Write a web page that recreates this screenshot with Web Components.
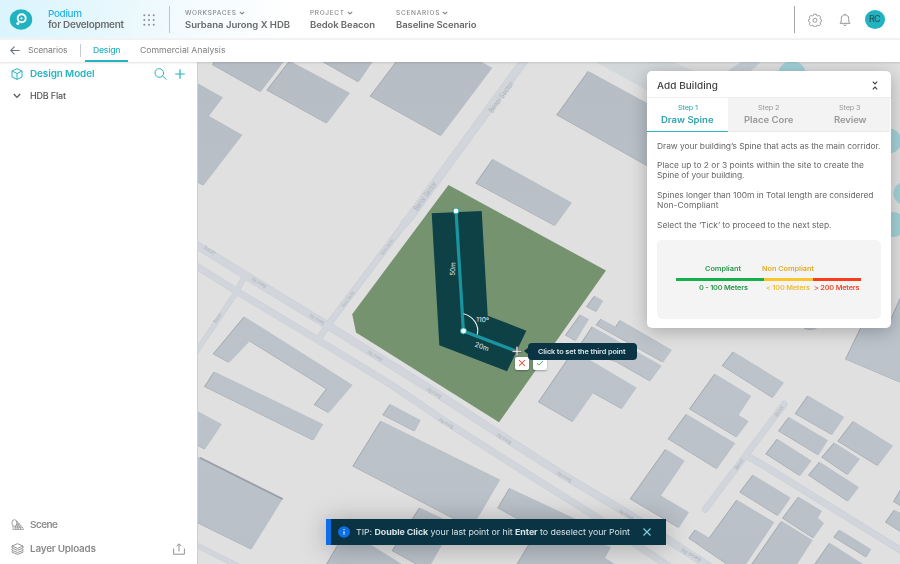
<!DOCTYPE html>
<html lang="en">
<head>
<meta charset="utf-8">
<title>Podium for Development</title>
<style>
html,body{margin:0;height:100%;overflow:hidden}
body{font-family:Inter,"Liberation Sans",sans-serif;color:#666;background:#fff}
</style>
</head>
<body>
<podium-app></podium-app>
<script>
const define = (name, html, setup) => customElements.define(name, class extends HTMLElement {
  constructor() {
    super();
    const t = document.createElement('template');
    t.innerHTML = html;
    this.attachShadow({ mode: 'open' }).append(t.content.cloneNode(true));
  }
  connectedCallback() { if (setup) setup(this, this.shadowRoot); }
});

/* A single line of slightly widened text, tracked so that it spans the width given in "w". */
const WIDEN = 1.08;
define('fit-text', `<style>
  :host{display:block;white-space:nowrap;flex:none}
  span{display:inline-block;transform-origin:0 50%}
</style><span><slot></slot></span>`, (el, root) => {
  const w = parseFloat(el.getAttribute('w'));
  const span = root.querySelector('span');
  el.style.width = w + 'px';
  span.style.letterSpacing = '0px';
  span.style.transform = 'none';
  const n = el.textContent.length;
  const natural = span.getBoundingClientRect().width;
  span.style.letterSpacing = ((w / WIDEN - natural) / (n - 1)) + 'px';
  span.style.transform = `scaleX(${WIDEN})`;
});

const ICONS = {
  logo: ['0 0 24 22', '<ellipse cx="12" cy="11.500" rx="11.2" ry="10.3" fill="#22b3c1" stroke="none"/><circle cx="12.700" cy="10.2" r="4" stroke="#fff" stroke-width="1.9"/><circle cx="12.5" cy="10.3" r="1.1" fill="#fff" stroke="none"/><circle cx="8.8" cy="15.4" r="1.5" fill="#fff" stroke="none"/>'],
  apps: ['0 0 12 12', [1.3, 6, 10.7].map(y => [1.3, 6, 10.7].map(x => `<circle cx="${x}" cy="${y}" r=".95" fill="currentColor" stroke="none"/>`).join('')).join('')],
  caret: ['0 0 6 4', '<path d="M.8.8 3 3 5.2.8" stroke-width="1.2"/>'],
  gear: ['0 0 14 14', '<path d="M5.8 1.1h2.4l.4 1.4 1.2.5 1.3-.7 1.6 1.7-.7 1.2.5 1.3 1 .3v1.5l-1.1.5-.4 1.1.7 1.3-1.6 1.6-1.3-.7-1.2.5-.4 1.3H5.8l-.4-1.3-1.2-.5-1.3.7-1.6-1.6.7-1.3-.5-1.1-1-.5V6.800l1-.3.5-1.300-.7-1.200 1.600-1.700 1.300.7 1.200-.5z" stroke-width=".85"/><circle cx="7" cy="7.200" r="2" stroke-width=".85"/>'],
  bell: ['0 0 12 14', '<path d="M1 10.300h10c-1-.8-1.300-1.800-1.300-3.500V5.500C9.700 3.300 8.200 1.900 6 1.900S2.300 3.300 2.300 5.500v1.300C2.300 8.500 2 9.500 1 10.300zM6 .8v1M4.700 11.500c.2 1.500 2.400 1.500 2.600 0" stroke-width=".95"/>'],
  back: ['0 0 10 9', '<path d="M9.600 4.500H.8M4.500.7.7 4.500l3.800 3.800" stroke-width="1.100"/>'],
  cube: ['0 0 12 12', '<path d="M6 .7 11 3v6L6 11.400 1 9V3zM1 3l5 2.500L11 3M6 5.500v5.900" stroke-width="1"/>'],
  search: ['0 0 13 12', '<circle cx="5.300" cy="5" r="4.300" stroke-width="1"/><path d="m8.500 8 4 3.500" stroke-width="1"/>'],
  plus: ['0 0 10 10', '<path d="M5 .3v9.400M.2 5h9.600" stroke-width="1.200"/>'],
  down: ['0 0 8 6', '<path d="m.8 1 3.200 3.400L7.200 1" stroke-width="1.300"/>'],
  scene: ['0 0 13 12', '<ellipse cx="3.400" cy="4" rx="2.500" ry="3.300" stroke-width=".8"/><path d="M2 7v3.500h10.300v-1.200L5.500 1.600M4.200 7.300 5 10.300M5.800 5l1.500 5.300M6 3.300l4 7M3.300 8.900l8-.2M4 7.200l6-.2M6 5.200l2.600-.1" stroke-width=".7"/>'],
  layers: ['0 0 13 12', '<path d="M6.500.7 12 3 6.500 5.400 1 3zM1 3v2l5.500 2.300L12 5V3M1 5.900v1.400l5.500 2.200L12 7.300V5.900M1 8.200v1l5.500 2.200L12 9.200v-1" stroke-width=".9"/>'],
  upload: ['0 0 12 12', '<path d="M.6 5.500v5.700h10.800V5.500M6 8.500V.9M3.600 3.200 6 .8l2.400 2.400" stroke-width=".95"/>'],
  collapse: ['0 0 6 9', '<path d="M.8.7 3 2.900 5.200.7M.8 8.300 3 6.100l2.200 2.200" stroke-width="1.100"/>'],
  info: ['0 0 12 12', '<ellipse cx="6" cy="6" rx="6" ry="5.700" fill="#0e6ee6" stroke="none"/><path d="M6 5.200V8.600M6 3v1" stroke="#fff" stroke-width="1"/>'],
  close: ['0 0 8 8', '<path d="m.5.5 7 7M7.500.5l-7 7" stroke-width="1.200"/>'],
  tick: ['0 0 8 6', '<path d="m.5 3.400 2.200 2L7.500.6" stroke-width="1.100"/>'],
};
define('ui-icon', `<style>:host{display:block;flex:none;line-height:0}svg{display:block}</style>`, (el, root) => {
  const [box, body] = ICONS[el.getAttribute('name')];
  const [, , w, h] = box.split(' ');
  root.querySelector('svg')?.remove();
  root.append(document.createRange().createContextualFragment(
    `<svg width="${w}" height="${h}" viewBox="${box}" fill="none" stroke="currentColor">${body}</svg>`));
});

define('crumb-item', `<style>
  :host{display:block;height:25px}
  .k{display:flex;gap:3px;align-items:center;height:8px;font-size:6px;line-height:8px;font-weight:500;color:#8a8a8a}
  .v{font-size:8.800px;line-height:12px;margin-top:1.500px;font-weight:600;color:#686868}
</style><div class="k"><slot name="kind"></slot><ui-icon name="caret"></ui-icon></div><div class="v"><slot></slot></div>`);

define('top-bar', `<style>
  :host{display:flex;box-sizing:border-box;height:40px;border-bottom:2px solid #f3f3f3;padding-left:9px;
    background:linear-gradient(100deg,#dbf4fd 0,#e4f7fd 90px,#f4fbfe 190px,#fff 290px)}
  .logo{margin-top:8px;width:24px}
  .brand{margin:8px 0 0 15px;width:95px;font-size:9.200px;line-height:11.300px;font-weight:600;color:#6c6c6c}
  .brand .p{color:#23b3e4;font-weight:500}
  .apps{margin-top:14px;width:12px;color:#888}
  .rule{width:1px;height:27px;margin-top:6px;background:#bcc4c9}
  .apps + .rule{margin-left:14px}
  nav{display:grid;grid-template-columns:125px 85.500px 100px;margin:9px 0 0 15px;flex:1}
  .rule.r{background:#a5a5a5}
  .g{margin:13px 0 0 13.500px;color:#8c8c8c}
  .b{margin:12.500px 0 0 17px;color:#8c8c8c}
  .a{box-sizing:border-box;margin:10px 15px 0 14px;width:20px;height:18.500px;border-radius:50%;background:#22b3c1;color:#25525b;
    display:flex;justify-content:center;align-items:center;font-size:8.300px;font-weight:500}
</style>
<ui-icon class="logo" name="logo"></ui-icon>
<div class="brand"><fit-text class="p" w="34">Podium</fit-text><fit-text w="76">for Development</fit-text></div>
<ui-icon class="apps" name="apps"></ui-icon><div class="rule"></div>
<nav>
<crumb-item><fit-text slot="kind" w="51">WORKSPACES</fit-text><fit-text w="105">Surbana Jurong X HDB</fit-text></crumb-item>
<crumb-item><fit-text slot="kind" w="34">PROJECT</fit-text><fit-text w="65">Bedok Beacon</fit-text></crumb-item>
<crumb-item><fit-text slot="kind" w="43.500">SCENARIOS</fit-text><fit-text w="80.500">Baseline Scenario</fit-text></crumb-item>
</nav>
<div class="rule r"></div>
<ui-icon class="g" name="gear"></ui-icon><ui-icon class="b" name="bell"></ui-icon>
<div class="a"><fit-text w="11.500">RC</fit-text></div>`);

define('sub-nav', `<style>
  :host{display:flex;height:22px;position:relative;z-index:2;background:#fff;box-shadow:0 1px 2px rgba(0,0,0,.13);font-size:8px;line-height:10px;color:#7c7c7c;box-sizing:border-box;padding-left:10px}
  ui-icon{margin-top:6px;color:#68727a}
  .t{margin:5px 0 0 7.500px}
  .rule{width:1px;height:13px;margin:4px 4px 0 12.500px;background:#c4ccd2}
  .on{box-sizing:border-box;width:43px;padding:5px 0 0 8px;border-bottom:2px solid #25b4c2;color:#25b4c2;font-weight:500;height:21.500px}
  .c{margin:5px 0 0 12.500px}
</style>
<ui-icon name="back"></ui-icon><fit-text class="t" w="39.500">Scenarios</fit-text><div class="rule"></div>
<div class="on"><fit-text w="27.500">Design</fit-text></div><fit-text class="c" w="85.500">Commercial Analysis</fit-text>`);

define('side-bar', `<style>
  :host{display:flex;flex-direction:column;box-sizing:border-box;width:197px;background:#fff;padding:5px 12px 8px 11px;font-size:9.200px;line-height:14px;color:#8b8b8b;font-weight:600}
  .row{display:grid;grid-template-columns:19px 1fr auto auto;align-items:center}
  .top{color:#25b4c2;height:14px}
  .top ui-icon:nth-of-type(2){margin-right:8.500px}
  .hdb{color:#555;font-size:8.300px;font-weight:500;height:14px;margin-top:8px}
  .hdb ui-icon{margin-left:2px}
  .gap{flex:1}
  .low{height:14px}
  .low + .low{margin-top:10px}
</style>
<div class="row top"><ui-icon name="cube"></ui-icon><fit-text w="64.500">Design Model</fit-text><ui-icon name="search"></ui-icon><ui-icon name="plus"></ui-icon></div>
<div class="row hdb"><ui-icon name="down"></ui-icon><fit-text w="36">HDB Flat</fit-text></div>
<div class="gap"></div>
<div class="row low"><ui-icon name="scene"></ui-icon><fit-text w="28">Scene</fit-text></div>
<div class="row low"><ui-icon name="layers"></ui-icon><fit-text w="66">Layer Uploads</fit-text><ui-icon name="upload"></ui-icon></div>`);

const BUILDINGS = [
  '215,60 213.300,65 261,91.700 285,60', '290,61 350,93 327,123.300 267.300,90.300', '320,60 358.700,82 374,60',
  '398,60 370.700,96.300 441.300,135.700 492.300,68 478,60', '190,79 223,97.500 209,116 242.500,135 203.700,185.300 190,178',
  '588.700,71.300 680,121 655,170 557.300,115', '493.300,159.300 572,202.700 555.300,225.700 476.300,183.300',
  '595,296 603.300,300.700 596.700,311.700 587,306.700', '580.700,314.700 589,319.300 576,340.700 566,335.300',
  '601.300,319 616,327 620.700,320.300 672,350 663.300,362.300 596.700,325',
  '592.700,326.700 661.700,365.700 650.300,381 617,362 577,350',
  '569,358 539,402 573,421.700 593.300,392.700 622,408.700 636.700,387.700 590,360',
  '733.700,351.700 784,382.700 773,397.700 722.700,365.700',
  '715.300,374 751.300,396 738.700,415 748.700,421.300 737,437 690,409',
  '686.700,414.300 735.300,443.300 717,468.700 668.700,439',
  '666,449.300 684.700,460.700 661,495.700 689,512.300 679,527.700 630.700,499',
  '808.300,395.700 844.300,417 832.300,434.700 795.700,413.700', '789.300,417.300 828,440.300 818.700,455 779,431',
  '777.700,439 811.700,460.700 800.300,475.700 766.300,454', '853.700,421.300 893,445.700 878,465.700 838.300,441.300',
  '834.700,442.700 860,459 848,474.700 822.300,457.300', '820,462 859,487.300 848.300,501.300 809,475.300',
  '753.300,475 790.700,497.700 778.300,515.700 740.300,492.300',
  '799,497 822,511 818,518 824,523.300 813.700,538 783,518.300',
  '737.300,500 774.300,522.300 745,566 730,566 689.300,538.300 695.700,529.700 709.700,538',
  '782,521.300 812.700,540.300 796,566 751,566', '840,530 871.300,549.300 866.700,557.300 834.300,537.300',
  '830,543 866,566 814,566', '905,483 894,501.700 905,508', '894.700,510 905,515 905,534 886,522.300',
  '846,359.300 863,324 889,324 905,289 905,384 896.700,380.700',
  '244.700,316.700 352.700,385 329,412.700 314.700,404.700 327,389 250,341 229.300,362.500 213.700,354',
  '214.700,371.700 323.300,424.300 313.700,440.300 205,386.700', '190,407 222,424.300 205,449.300 190,441',
  '190,452 200,457.700 282.700,499 251.700,549.300 190,519',
  '390.700,404.300 420.700,420.300 415,431.300 383.300,415', '381.300,421 500.300,479.700 472,528 353.300,466.300',
  '420,507.700 454,524 430,566 420,566 392.700,550.700', '347,530 405,566 326,566',
  '510,488.300 580,521 570,535 540,531 498.300,508', '541,525 611,547 605,558 618,566 516.500,566',
];
const ROADS = [
  ['M526,58 410,217 404,224', 8.500], ['M408,219 328,325 318,340', 6.500],
  ['M190,241 245,275 327,325 430,389 503,436.500 563,475 627,513 670,541 710,567', 8],
  ['M190,262 237,291.500 318,340 390,384 447,422.500 543,483.500 590,513 640,547 670,567', 7],
  ['M245,275 236.700,291.700 194,355', 5.500], ['M190,542 242,568', 5.500],
  ['M784.300,404 705,509.500', 6.500], ['M747,456 763,465 905,553', 7],
];
const LABELS = [
  ['Benoi Sector', 501, 97, -54, 37, 7.500], ['Benoi Sector', 425, 196, -54, 34, 7.500],
  ['Benoi Sector', 387, 247, -54, 19, 4.500], ['Benoi Sector', 348, 299, -54, 19, 4.500],
  ['Benoi Rd', 259, 283, 211, 16, 5], ['Benoi Rd', 317, 319.500, 211, 16, 5], ['Benoi Rd', 375, 356, 211, 16, 5],
  ['Benoi Rd', 434, 393, 212, 16, 5], ['Benoi Rd', 446, 423.500, 212, 16, 5], ['Benoi Rd', 504, 439, 212, 16, 5],
  ['Benoi Rd', 564, 477, 212, 16, 5], ['Benoi Rd', 626, 515, 212, 16, 5], ['Benoi Rd', 691, 555, 209, 22, 5.500],
  ['Jurong', 209.500, 251, 210, 13, 6], ['Sector', 217.500, 318, -55, 11, 5], ['Benoi', 779, 411, -54, 12, 5], ['Benoi', 739, 464, -54, 12, 5],
];
const roads = (extra, color) => ROADS.map(([d, w]) => `<path d="${d}" stroke="${color}" stroke-width="${w + extra}"/>`).join('');
const label = ([t, x, y, a, w, s], c) => `<text transform="translate(${x} ${y}) rotate(${a})" text-anchor="middle" dy=".35em" textLength="${w}" lengthAdjust="spacingAndGlyphs" font-size="${s}" fill="${c}">${t}</text>`;

define('site-map', `<style>
  :host{display:block;overflow:hidden;background:#e0e0e0}
  svg{display:block;font-family:Inter,sans-serif}
  .b{filter:drop-shadow(-.5px .6px .5px rgba(85,95,108,.45))}
</style>
<svg width="703" height="502" viewBox="197 62 703 502">
<defs><linearGradient id="bg" gradientUnits="userSpaceOnUse" x1="0" y1="62" x2="0" y2="564"><stop offset="0" stop-color="#b6bdc5"/><stop offset=".6" stop-color="#bcc3cb"/><stop offset="1" stop-color="#b9c0c8"/></linearGradient></defs>
<path d="M592,60 652,93 697,72 668,60z" fill="#d2d7da"/>
<path d="M744,60 720,76 745,76 763,60z" fill="#c7ced6"/>
<g fill="none" stroke-linecap="round" stroke-linejoin="round">${roads(0, '#cacfd6')}${roads(-1.200, '#d2d6dc')}</g>
${LABELS.map(l => label(l, '#abb0b8')).join('')}
<g class="b" fill="url(#bg)">${BUILDINGS.map(p => `<polygon points="${p}"/>`).join('')}<ellipse cx="811" cy="323" rx="9" ry="7"/></g>
<path d="M200,457.700 282.700,499" stroke="#979ea5" stroke-width="1.800"/>
<g fill="#a2d2d9"><circle cx="792" cy="75" r="14"/><circle cx="889" cy="141" r="12.500"/><circle cx="905" cy="193.500" r="11.500"/><circle cx="893" cy="224.500" r="12.500"/></g>
<polygon points="448.500,185 606,270.500 499,422.300 356,332.500 352.200,314.300" fill="#769370"/>
<polygon points="431.700,213.300 481.700,211 487.700,315.700 526.300,330.700 507,371.300 439.300,345.300" fill="#0d4146"/>
<path d="M456,210.700 463.400,331 516.700,351.300" fill="none" stroke="#1a949f" stroke-width="3.200"/>
<path d="M463.500,313.700C473,316 479.500,325 477.300,334.500" fill="none" stroke="#e9f2f2" stroke-width="1.100"/>
<g fill="#fff" stroke="#1a9ca8" stroke-width="1"><circle cx="456" cy="210.900" r="3"/><circle cx="463.500" cy="330.900" r="3"/></g>
${label(['50m', 452.800, 269, -87, 13.500, 6.800], '#e9f2f2')}${label(['110º', 482.500, 319.700, 3, 13, 6.800], '#e9f2f2')}${label(['20m', 482, 346.500, 20, 14.500, 6.800], '#e9f2f2')}
<path d="M517,346.300V356.300M512,351.300H522" stroke="#555" stroke-width="2.200"/><path d="M517,346.800V355.800M512.500,351.300H521.500" stroke="#fff" stroke-width="1.100"/>
</svg>`);

define('point-tip', `<style>
  :host{display:flex;align-items:center;justify-content:center;position:relative;box-sizing:border-box;width:109px;height:17px;border-radius:4px;background:#0a3443;color:#dbe7ea;font-size:6.800px;font-weight:600}
  :host::before{content:"";position:absolute;left:-4px;top:4.500px;border:4px solid transparent;border-left:0;border-right:5px solid #0a3443}
</style><slot></slot>`);
define('mini-button', `<style>
  :host{display:flex;align-items:center;justify-content:center;width:14px;height:12.500px;border-radius:2px;background:#fff;box-shadow:0 1px 2px rgba(0,0,0,.3)}
  ::slotted(ui-icon){transform:scale(.86)}
</style><slot></slot>`);

define('step-tab', `<style>
  :host{display:flex;flex-direction:column;align-items:center;box-sizing:border-box;height:34px;padding-top:5px;background:#f3f3f3;color:#999;border-bottom:1px solid #e9e9e9}
  :host([active]){background:#fff;color:#2da3b0;border-bottom:1.500px solid #2bb5c3}
  .s{font-size:6.800px;line-height:9px}
  .n{font-size:8.800px;line-height:12px;margin-top:2px;font-weight:600}
</style><div class="s"><slot name="step"></slot></div><div class="n"><slot></slot></div>`);

define('length-legend', `<style>
  :host{display:block;box-sizing:border-box;height:79px;border-radius:5px;background:#f4f4f4;padding:24px 19.500px 0 19px;font-size:6.800px;line-height:10px;font-weight:600}
  .r{display:flex}
  .r :first-child{color:#25984b}.r :nth-child(2){color:#e0ac25}.r :nth-child(3){color:#f04a2b}
  .t{padding-left:29px;gap:21px}
  .bar{display:grid;grid-template-columns:88fr 48.500fr 48.500fr;height:3px;margin:4px 0 2px}
  .bar i:nth-child(1){background:#16b04b}.bar i:nth-child(2){background:#fbc62c}.bar i:nth-child(3){background:#f83e1c}
  .d{padding-left:22.500px}
  .d :nth-child(2){margin-left:18.500px;color:#f0bd32}.d :nth-child(3){margin-left:4px}
</style>
<div class="r t"><fit-text w="36">Compliant</fit-text><fit-text w="52">Non Compliant</fit-text></div>
<div class="bar"><i></i><i></i><i></i></div>
<div class="r d"><fit-text w="49">0 - 100 Meters</fit-text><fit-text w="44">&lt; 100 Meters</fit-text><fit-text w="45.500">&gt; 200 Meters</fit-text></div>`);

define('build-panel', `<style>
  :host{display:flex;flex-direction:column;box-sizing:border-box;width:243.500px;height:256.500px;border-radius:5px;background:#fff;box-shadow:0 3px 18px rgba(0,0,0,.26);overflow:hidden}
  header{display:flex;flex:none;justify-content:space-between;align-items:center;box-sizing:border-box;height:27px;padding:2px 12.500px 0 10px;font-size:9.200px;font-weight:500;color:#3d3d3d;border-bottom:1px solid #eee}
  .tabs{display:grid;flex:none;grid-template-columns:repeat(3,1fr)}
  .copy{box-sizing:border-box;height:107.500px;flex:none;padding:9.500px 10px 0;font-size:7.800px;line-height:9.900px;color:#666}
  .copy p{margin:0 0 10px}
  length-legend{flex:none;margin:0 10px}
</style>
<header><fit-text w="61">Add Building</fit-text><ui-icon name="collapse"></ui-icon></header>
<div class="tabs">
<step-tab active><fit-text slot="step" w="20">Step 1</fit-text><fit-text w="52.500">Draw Spine</fit-text></step-tab>
<step-tab><fit-text slot="step" w="21.500">Step 2</fit-text><fit-text w="49.500">Place Core</fit-text></step-tab>
<step-tab><fit-text slot="step" w="21.500">Step 3</fit-text><fit-text w="32.500">Review</fit-text></step-tab>
</div>
<div class="copy">
<p><fit-text w="223.500">Draw your building’s Spine that acts as the main corridor.</fit-text></p>
<p><fit-text w="207">Place up to 2 or 3 points within the site to create the</fit-text><fit-text w="87.500">Spine of your building.</fit-text></p>
<p><fit-text w="216.500">Spines longer than 100m in Total length are considered</fit-text><fit-text w="61.500">Non-Compliant</fit-text></p>
<p><fit-text w="174.500">Select the ‘Tick’ to proceed to the next step.</fit-text></p>
</div>
<length-legend></length-legend>`);

define('tip-toast', `<style>
  :host{display:flex;align-items:center;box-sizing:border-box;width:340px;height:26px;border-left:5px solid #0e6ee6;background:#0a3443;color:#d5e2e6;font-size:8.200px;padding:0 15px 0 6.500px;box-shadow:0 2px 26px rgba(0,0,0,.28)}
  fit-text{margin-left:6.500px;flex:1 0 auto}
  .x{color:#7fd0dc}
</style><ui-icon name="info"></ui-icon><fit-text w="274">TIP: <b>Double Click</b> your last point or hit <b>Enter</b> to deselect your Point</fit-text><ui-icon class="x" name="close"></ui-icon>`);

define('podium-app', `<style>
  :host{display:grid;grid-template-rows:40px 22px 1fr;width:900px;height:564px;overflow:hidden}
  main{display:grid;grid-template-columns:197px 1fr;min-height:0}
  .stage{position:relative;overflow:hidden}
  .stage::after{content:"";position:absolute;inset:0 auto 0 0;width:1px;background:#cdcfd1}
  point-tip{position:absolute;left:330.500px;top:280.500px}
  .no,.ok{position:absolute;top:295px}
  .no{left:318px;color:#f04a2b}.ok{left:336px;color:#25a85a}
  build-panel{position:absolute;right:9.500px;top:9px}
  tip-toast{position:absolute;left:129px;bottom:19px}
</style>
<top-bar></top-bar><sub-nav></sub-nav>
<main><side-bar></side-bar>
<div class="stage"><site-map></site-map>
<mini-button class="no"><ui-icon name="close"></ui-icon></mini-button><mini-button class="ok"><ui-icon name="tick"></ui-icon></mini-button>
<point-tip><fit-text w="87.500">Click to set the third point</fit-text></point-tip>
<build-panel></build-panel><tip-toast></tip-toast></div></main>`);
</script>
</body>
</html>
